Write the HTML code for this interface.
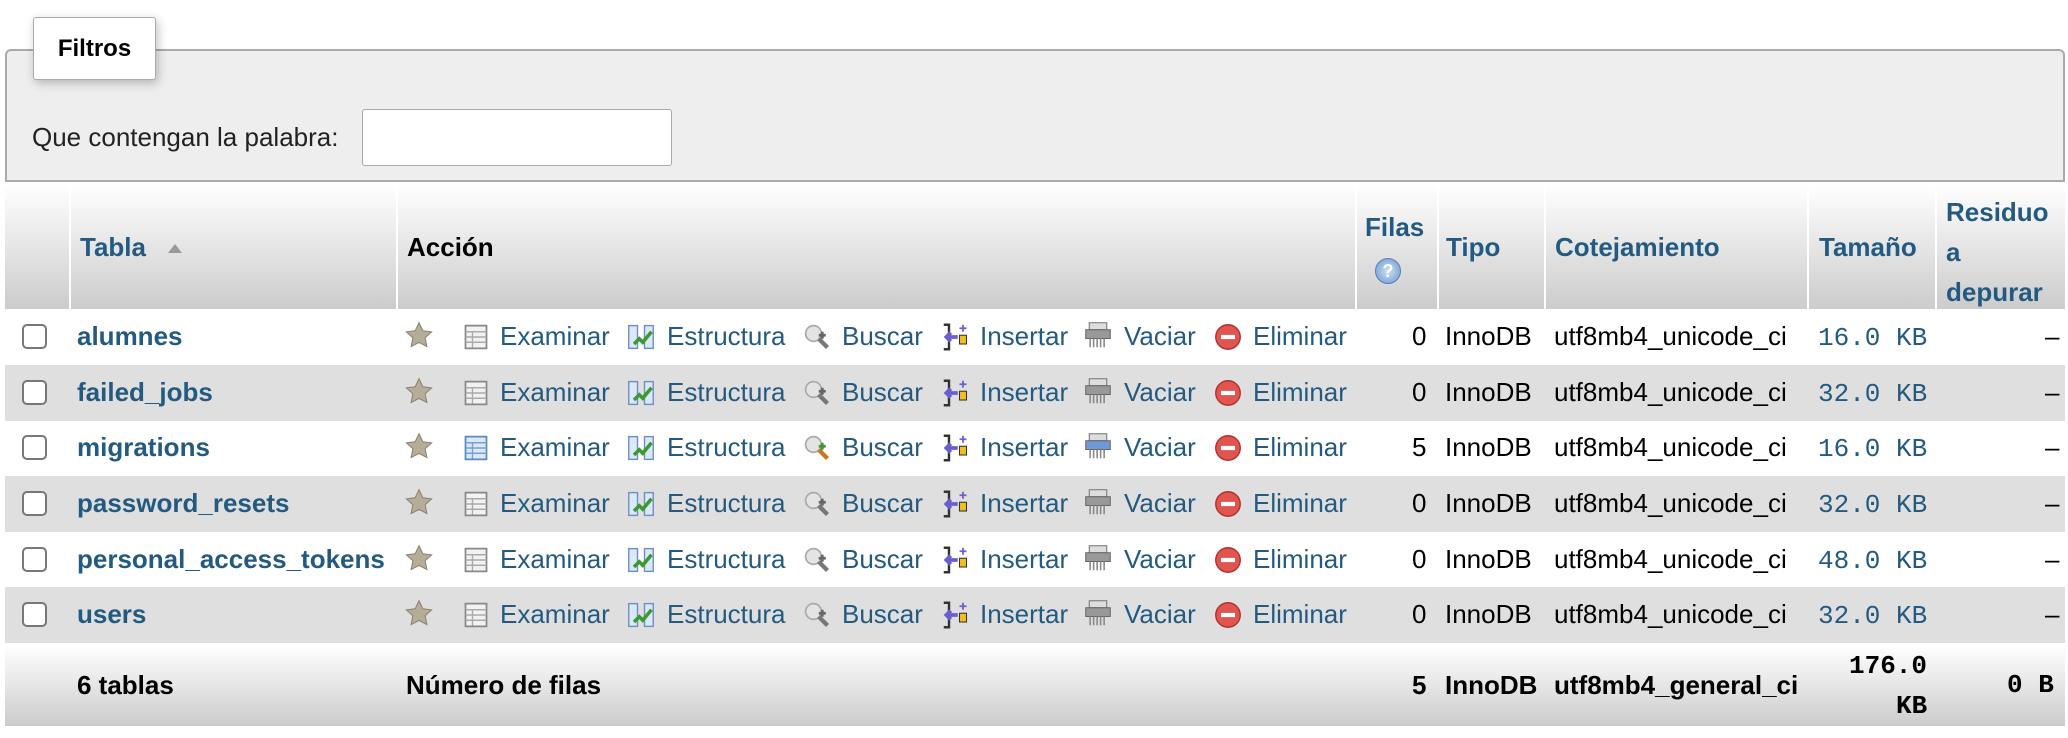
<!DOCTYPE html>
<html><head><meta charset="utf-8"><style>
*{margin:0;padding:0;box-sizing:border-box}
body{width:2068px;height:738px;background:#fff;font-family:"Liberation Sans",Arial,sans-serif;font-size:26px;color:#000;position:relative;overflow:hidden}
.a{position:absolute;white-space:nowrap}
.fs{left:5px;top:49px;width:2060px;height:133px;background:#eee;border:2px solid #aaa;border-radius:6px 6px 0 0}
.lg{left:33px;top:17px;width:123px;height:63px;background:#fff;border:1px solid #aaa;border-radius:3px;box-shadow:2px 3px 10px rgba(0,0,0,.25);font-weight:bold;font-size:24px;line-height:61px;text-align:center}
.inp{left:362px;top:109px;width:310px;height:57px;background:#fff;border:1px solid #aaa;border-radius:3px}
.hd{left:5px;top:184px;width:2060px;height:125px;background:linear-gradient(#fff,#ccc)}
.dv{top:184px;width:2px;height:125px;background:#fff}
.row{left:5px;width:2060px;height:56px}
.g{background:#dfdfdf}
.ft{left:5px;top:645px;width:2060px;height:81px;background:linear-gradient(#fff,#ccc)}
.l{color:#235a81}
.b{font-weight:bold}
.m{font-family:"Liberation Mono",monospace;color:#235a81}
.cb{width:25px;height:25px;border:2px solid #777;border-radius:5px;background:#fff}
.ic{width:28px;height:28px}
</style></head><body>
<div class="a fs"></div>
<div class="a lg">Filtros</div>
<div class="a" style="left:32px;top:122px;color:#222">Que contengan la palabra:</div>
<div class="a inp"></div>
<div class="a hd"></div>
<div class="a dv" style="left:69px"></div><div class="a dv" style="left:396px"></div><div class="a dv" style="left:1355px"></div><div class="a dv" style="left:1437px"></div><div class="a dv" style="left:1544px"></div><div class="a dv" style="left:1807px"></div><div class="a dv" style="left:1935px"></div>
<div class="a l b" style="left:80px;top:232px">Tabla</div>
<div class="a" style="left:168px;top:244px;width:0;height:0;border-left:7px solid transparent;border-right:7px solid transparent;border-bottom:9px solid #999"></div>
<div class="a b" style="left:407px;top:232px">Acción</div>
<div class="a l b" style="left:1365px;top:212px">Filas</div>
<div class="a" style="left:1375px;top:258px;width:26px;height:26px;border-radius:50%;background:radial-gradient(#cfe0f5,#6a96d0);border:1px solid #5a7fb5;color:#fff;font-size:18px;font-weight:bold;text-align:center;line-height:24px">?</div>
<div class="a l b" style="left:1446px;top:232px">Tipo</div>
<div class="a l b" style="left:1555px;top:232px">Cotejamiento</div>
<div class="a l b" style="left:1819px;top:232px">Tamaño</div>
<div class="a l b" style="left:1946px;top:192px;line-height:40px">Residuo<br>a<br>depurar</div>
<div class="a row" style="top:309px"></div>
<div class="a row g" style="top:365px"></div>
<div class="a row" style="top:420px"></div>
<div class="a row g" style="top:476px"></div>
<div class="a row" style="top:532px"></div>
<div class="a row g" style="top:587px"></div>
<div id="rows"></div>
<div class="a ft"></div>
<div class="a b" style="left:77px;top:670px">6 tablas</div>
<div class="a b" style="left:406px;top:670px">Número de filas</div>
<div class="a b" style="left:1412px;top:670px">5</div>
<div class="a b" style="left:1445px;top:670px">InnoDB</div>
<div class="a b" style="left:1554px;top:670px">utf8mb4_general_ci</div>
<div class="a b m" style="left:1849px;top:651px;color:#000">176.0</div>
<div class="a b m" style="left:1896px;top:691px;color:#000">KB</div>
<div class="a b m" style="left:2007px;top:670px;color:#000">0 B</div>
<script>
var names=["alumnes","failed_jobs","migrations","password_resets","personal_access_tokens","users"];
var f=["0","0","5","0","0","0"],s=["16.0","32.0","16.0","32.0","48.0","32.0"];
var tops=[309,365,420,476,532,587],h="";
function ic(x,y,svg){return '<svg class="a ic" style="left:'+x+'px;top:'+y+'px" viewBox="0 0 16 16">'+svg+'</svg>';}
for(var i=0;i<6;i++){var t=tops[i],ty=t+12,iy=t+14,c=i==2;
h+='<div class="a cb" style="left:22px;top:'+(t+15)+'px"></div>';
h+='<div class="a l b" style="left:77px;top:'+ty+'px">'+names[i]+'</div>';
h+=ic(405,iy-2,'<path d="M8 1l2.2 4.6 5 .6-3.7 3.4 1 5L8 12.2 3.5 14.6l1-5L.8 6.2l5-.6z" fill="#b5ad98" stroke="#8a8270" stroke-width=".6"/>');
h+=ic(462,iy,'<rect x="2" y="1.5" width="12" height="13" fill="'+(c?'#dbe8f8':'#f2f2f2')+'" stroke="'+(c?'#5a8ac6':'#888')+'"/><path d="M2 5h12M2 8h12M2 11h12M6 5v9" stroke="'+(c?'#7aa0d0':'#aaa')+'" stroke-width=".8"/>');
h+='<div class="a l" style="left:500px;top:'+ty+'px">Examinar</div>';
h+=ic(627,iy,'<rect x="1" y="1.5" width="5" height="13" fill="#dde8f5" stroke="#6a90c8" stroke-width=".8"/><rect x="10" y="1.5" width="5" height="13" fill="#dde8f5" stroke="#6a90c8" stroke-width=".8"/><path d="M4 12l3-3 2 2 5-6" stroke="#3a9a30" stroke-width="2" fill="none"/>');
h+='<div class="a l" style="left:667px;top:'+ty+'px">Estructura</div>';
h+=ic(803,iy,'<circle cx="6" cy="6" r="4.5" fill="#e4e4e4" stroke="#aaa"/><path d="M9 9l5 5" stroke="'+(c?'#c47a20':'#777')+'" stroke-width="2.5"/><path d="M9 7h4M11 5v4" stroke="'+(c?'#3a9a30':'#666')+'" stroke-width="1.6"/>');
h+='<div class="a l" style="left:842px;top:'+ty+'px">Buscar</div>';
h+=ic(942,iy,'<path d="M1 1h3v14H1" fill="none" stroke="#333" stroke-width="1.4"/><path d="M3 8h6M5 5.5L2.5 8 5 10.5" stroke="#6a5fd0" stroke-width="2.2" fill="none"/><rect x="10" y="7" width="4" height="5" fill="#f0c020" stroke="#333" stroke-width=".6"/><path d="M12 1v4M10 3h4" stroke="#6a5fd0" stroke-width="1"/>');
h+='<div class="a l" style="left:980px;top:'+ty+'px">Insertar</div>';
h+=ic(1084,iy-2,'<rect x="3" y="1" width="10" height="4" fill="#ddd" stroke="#777" stroke-width=".6"/><rect x="1" y="5" width="14" height="5" fill="'+(c?'#6f9ad8':'#999')+'" stroke="#666" stroke-width=".6"/><path d="M3.5 10v5M5.5 10v5M7.5 10v5M9.5 10v5M11.5 10v5" stroke="#888" stroke-width=".9"/>');
h+='<div class="a l" style="left:1124px;top:'+ty+'px">Vaciar</div>';
h+=ic(1214,iy,'<circle cx="8" cy="8" r="7" fill="#e05550" stroke="#b03030" stroke-width=".8"/><rect x="4" y="6.8" width="8" height="2.4" fill="#fff"/>');
h+='<div class="a l" style="left:1253px;top:'+ty+'px">Eliminar</div>';
h+='<div class="a" style="left:1412px;top:'+ty+'px">'+f[i]+'</div>';
h+='<div class="a" style="left:1445px;top:'+ty+'px">InnoDB</div>';
h+='<div class="a" style="left:1554px;top:'+ty+'px">utf8mb4_unicode_ci</div>';
h+='<div class="a m" style="left:1818px;top:'+(ty+2)+'px">'+s[i]+' KB</div>';
h+='<div class="a" style="left:2045px;top:'+ty+'px">–</div>';}
document.getElementById("rows").innerHTML=h;
</script>
</body></html>
